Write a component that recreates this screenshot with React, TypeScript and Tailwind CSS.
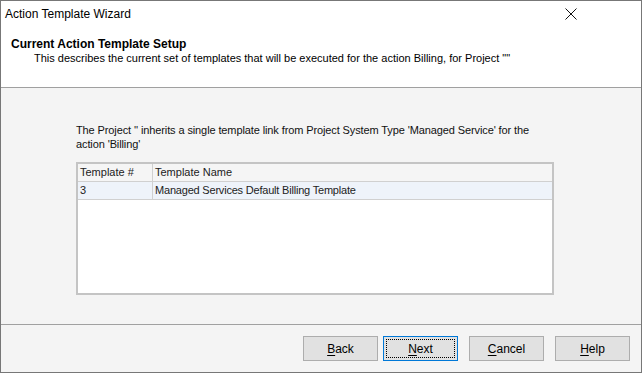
export default function App() {
  const font = { fontFamily: '"Liberation Sans", Arial, sans-serif' };

  return (
    <div
      className="w-[642px] h-[373px] flex flex-col bg-[#f4f4f4] border border-[#777777] text-[12px] text-black overflow-hidden"
      style={font}
    >
      {/* title bar */}
      <div className="h-[29px] bg-white flex items-start justify-between pl-[4px] pr-[64px] pt-[6px]">
        <span className="text-[12px] leading-[14px]">Action Template Wizard</span>
        <svg width="12" height="12" viewBox="0 0 12 12" className="mt-[1px]">
          <path d="M0.5 0.5 L11.5 11.5 M11.5 0.5 L0.5 11.5" stroke="#111" strokeWidth="1" fill="none" />
        </svg>
      </div>

      {/* header */}
      <div className="h-[58px] bg-white border-b border-[#a0a0a0] pl-[10px] pt-[7px]">
        <div className="font-bold text-[12px] leading-[14px]">Current Action Template Setup</div>
        <div className="pl-[23px] text-[11px] leading-[14px]">
          This describes the current set of templates that will be executed for the action Billing, for Project ""
        </div>
      </div>

      {/* body */}
      <div className="flex-1 pl-[75px] pt-[35px]">
        <p className="w-[480px] text-[11px] leading-[14px] tracking-[-0.11px] text-[#111]">
          The Project '' inherits a single template link from Project System Type 'Managed Service' for the action 'Billing'
        </p>
        <div className="mt-[11px] w-[478px] h-[133px] bg-white border-2 border-[#c4c4c4] text-[11px] text-[#222]">
          <div className="flex h-[18px] bg-[#f5f5f5] border-b border-[#d0d0d0]">
            <div className="w-[75px] pl-[2px] border-r border-[#d0d0d0] flex items-center">Template #</div>
            <div className="flex-1 pl-[2px] flex items-center">Template Name</div>
          </div>
          <div className="flex h-[18px] bg-[#eef3fa] border-b border-[#d0d0d0]">
            <div className="w-[75px] pl-[2px] border-r border-[#d0d0d0] flex items-center">3</div>
            <div className="flex-1 pl-[2px] flex items-center tracking-[-0.2px]">
              Managed Services Default Billing Template
            </div>
          </div>
        </div>
      </div>

      {/* footer */}
      <div className="h-[48px] border-t border-[#a0a0a0] flex justify-end items-start gap-[5px] pr-[11px] pt-[11px]">
        <button className="w-[75px] h-[25px] bg-[#e1e1e1] border border-[#adadad] text-[12px]">
          <span className="underline underline-offset-2">B</span>ack
        </button>
        <button className="w-[75px] h-[25px] bg-[#e1e1e1] border border-[#0078d7] text-[12px] p-[2px] mr-[6px]">
          <span className="w-full h-full flex items-center justify-center border border-dotted border-black">
            <span className="underline underline-offset-2">N</span>ext
          </span>
        </button>
        <button className="w-[75px] h-[25px] bg-[#e1e1e1] border border-[#adadad] text-[12px] mr-[6px]">
          <span className="underline underline-offset-2">C</span>ancel
        </button>
        <button className="w-[75px] h-[25px] bg-[#e1e1e1] border border-[#adadad] text-[12px]">
          <span className="underline underline-offset-2">H</span>elp
        </button>
      </div>
    </div>
  );
}
